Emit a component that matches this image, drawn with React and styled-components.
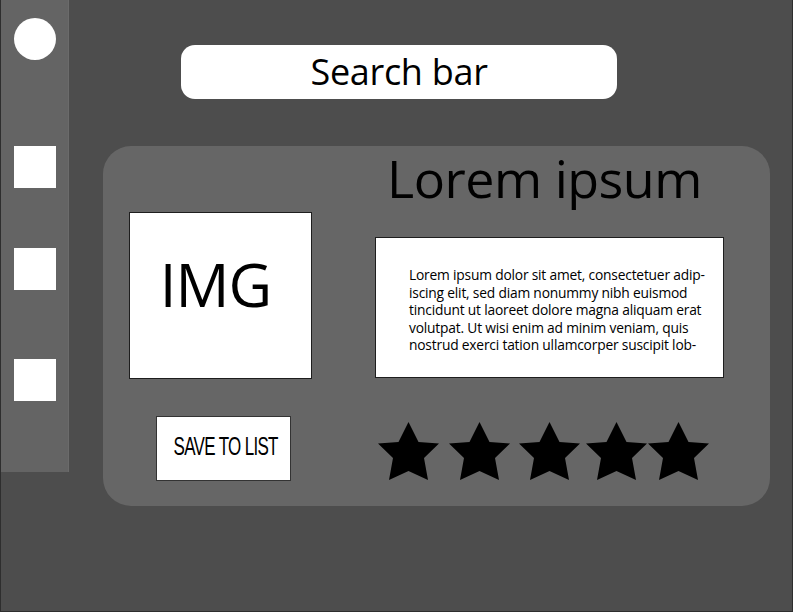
import React from "react"
import styled, { createGlobalStyle } from "styled-components"

const GlobalStyle = createGlobalStyle`
  html, body {
    margin: 0;
    padding: 0;
    background: #4d4d4d;
  }

  #root {
    width: 793px;
    height: 612px;
  }
`

const Frame = styled.div`
  box-sizing: border-box;
  width: 793px;
  height: 612px;
  display: flex;
  align-items: flex-start;
  background: #4d4d4d;
  border: 1px solid #2e2e2e;
  border-top: none;
  font-family: "Open Sans", "Noto Sans", sans-serif;
  color: #000;
`

const Sidebar = styled.nav`
  box-sizing: border-box;
  width: 68px;
  height: 472px;
  flex-shrink: 0;
  display: flex;
  flex-direction: column;
  align-items: center;
  padding-top: 18px;
  background: #646464;
  border-right: 1px solid #6b6b6b;
`

const Avatar = styled.div`
  width: 42px;
  height: 42px;
  border-radius: 50%;
  background: #fff;
`

const NavItem = styled.div`
  width: 42px;
  height: 42px;
  margin-top: ${props => props.$top}px;
  background: #fff;
`

const Main = styled.main`
  flex: 1;
  padding-left: 34px;
`

const SearchBar = styled.div`
  box-sizing: border-box;
  width: 436px;
  height: 54px;
  margin: 45px 0 0 78px;
  border-radius: 14px;
  background: #fff;
  display: flex;
  align-items: center;
  justify-content: center;
  font-size: 36px;
  line-height: 1;
  letter-spacing: -0.3px;
`

const Card = styled.section`
  width: 667px;
  height: 360px;
  margin-top: 47px;
  border-radius: 28px;
  background: #666;
  display: flex;
`

const LeftColumn = styled.div`
  width: 246px;
  padding: 66px 0 0 26px;
  display: flex;
  flex-direction: column;
  align-items: flex-start;
`

const ImageBox = styled.div`
  box-sizing: border-box;
  width: 183px;
  height: 167px;
  border: 1px solid #1e1e1e;
  background: #fff;
  display: flex;
  align-items: center;
  justify-content: center;
  padding: 0 10px 24px 0;
  font-size: 60px;
  line-height: 1;
  letter-spacing: -1px;
`

const SaveButton = styled.button`
  box-sizing: border-box;
  width: 135px;
  height: 65px;
  margin: 37px 0 0 27px;
  padding: 0 0 4px 4px;
  border: 1px solid #333;
  background: #fff;
  display: flex;
  align-items: center;
  justify-content: center;
  font-family: "Liberation Sans Narrow", "Liberation Sans", sans-serif;
  font-size: 25px;
  color: #000;
  white-space: nowrap;

  span {
    display: inline-block;
    letter-spacing: -1px;
    transform: scaleX(0.68);
  }
`

const RightColumn = styled.div`
  width: 349px;
  display: flex;
  flex-direction: column;
`

const Heading = styled.h1`
  margin: 6px 0 0;
  padding-right: 10px;
  text-align: center;
  font-size: 52px;
  font-weight: 400;
  line-height: 1;
  letter-spacing: -0.5px;
`

const TextBox = styled.div`
  box-sizing: border-box;
  width: 349px;
  height: 141px;
  margin-top: 33px;
  padding: 28px 0 0 33px;
  border: 1px solid #1e1e1e;
  background: #fff;
  font-size: 13.8px;
  font-weight: 500;
  line-height: 17.6px;
  letter-spacing: -0.2px;

  span {
    display: block;
    white-space: nowrap;
  }
`

const Stars = styled.div`
  display: flex;
  margin: 44px 0 0 3px;
`

const StarIcon = styled.svg`
  flex-shrink: 0;
  margin-left: ${props => props.$gap}px;
`

const Star = ({ gap }) => (
  <StarIcon $gap={gap} width="61" height="59" viewBox="0 0 61 59">
    <polygon
      points="30.5,0 40.5,20 61,21.5 46,36 50,58 30.5,49 11,58 15,36 0,21.5 20.5,20"
      fill="#000"
    />
  </StarIcon>
)

const starGaps = [0, 10, 9, 6, 1]

const lines = [
  "Lorem ipsum dolor sit amet, consectetuer adip-",
  "iscing elit, sed diam nonummy nibh euismod",
  "tincidunt ut laoreet dolore magna aliquam erat",
  "volutpat. Ut wisi enim ad minim veniam, quis",
  "nostrud exerci tation ullamcorper suscipit lob-",
]

const App = () => {
  return (
    <Frame>
      <GlobalStyle />
      <Sidebar>
        <Avatar />
        <NavItem $top={86} />
        <NavItem $top={60} />
        <NavItem $top={69} />
      </Sidebar>

      <Main>
        <SearchBar>Search bar</SearchBar>

        <Card>
          <LeftColumn>
            <ImageBox>IMG</ImageBox>
            <SaveButton>
              <span>SAVE TO LIST</span>
            </SaveButton>
          </LeftColumn>

          <RightColumn>
            <Heading>Lorem ipsum</Heading>
            <TextBox>
              {lines.map(line => (
                <span key={line}>{line}</span>
              ))}
            </TextBox>
            <Stars>
              {starGaps.map((gap, i) => (
                <Star key={i} gap={gap} />
              ))}
            </Stars>
          </RightColumn>
        </Card>
      </Main>
    </Frame>
  )
}

export default App
